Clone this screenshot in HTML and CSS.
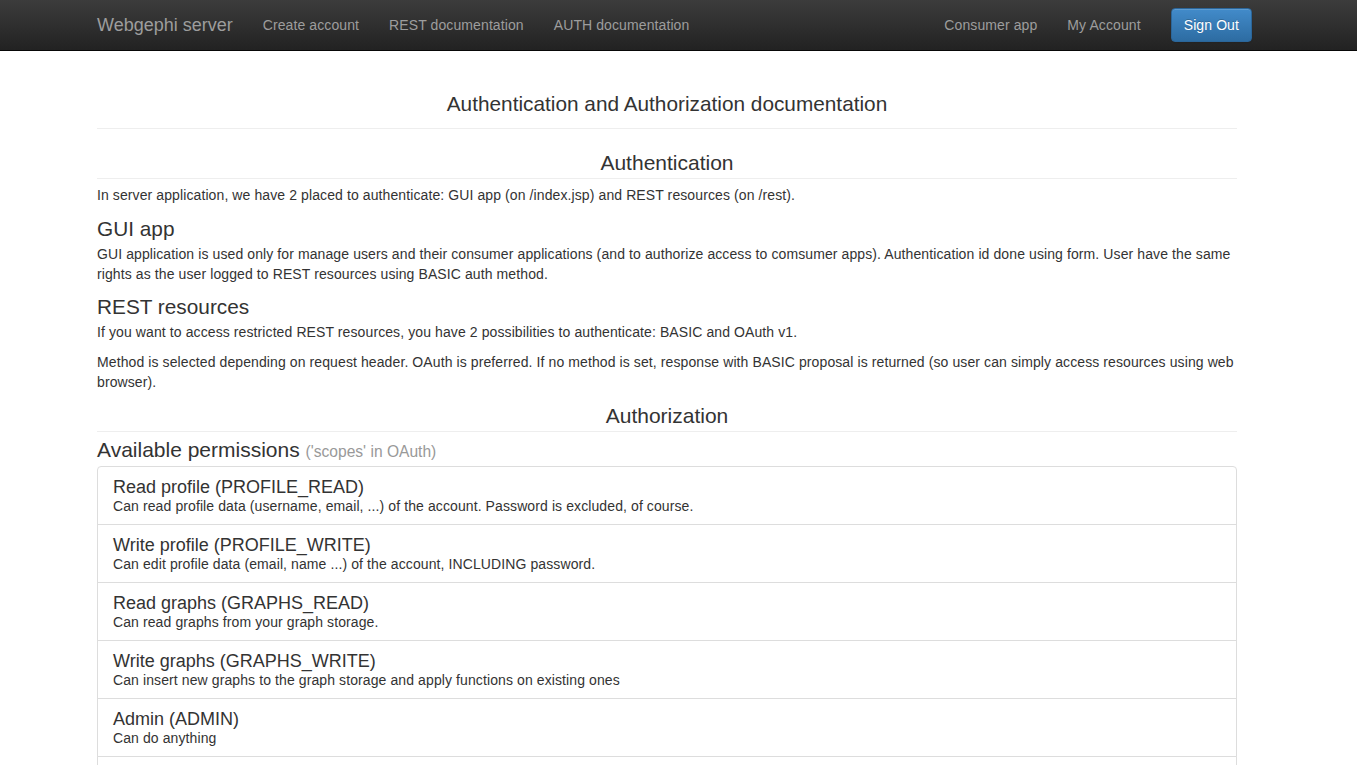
FILE: index.html
```html
<!DOCTYPE html>
<html lang="en">
<head>
<meta charset="utf-8">
<title>Webgephi server - AUTH documentation</title>
<link rel="stylesheet" href="styles.css">
</head>
<body>
<nav class="navbar">
  <div class="nav-inner">
    <a class="brand" href="#">Webgephi server</a>
    <ul class="nav">
      <li><a href="#">Create account</a></li>
      <li><a href="#">REST documentation</a></li>
      <li><a href="#">AUTH documentation</a></li>
    </ul>
    <div class="spacer"></div>
    <ul class="nav">
      <li><a href="#">Consumer app</a></li>
      <li><a href="#">My Account</a></li>
    </ul>
    <button class="btn-primary" type="button">Sign Out</button>
  </div>
</nav>

<main class="container">
  <h1 class="page-title">Authentication and Authorization documentation</h1>

  <h2 class="section-title">Authentication</h2>
  <p>In server application, we have 2 placed to authenticate: GUI app (on /index.jsp) and REST resources (on /rest).</p>

  <h3 class="sub-title">GUI app</h3>
  <p>GUI application is used only for manage users and their consumer applications (and to authorize access to comsumer apps). Authentication id done using form. User have the same rights as the user logged to REST resources using BASIC auth method.</p>

  <h3 class="sub-title">REST resources</h3>
  <p>If you want to access restricted REST resources, you have 2 possibilities to authenticate: BASIC and OAuth v1.</p>
  <p>Method is selected depending on request header. OAuth is preferred. If no method is set, response with BASIC proposal is returned (so user can simply access resources using web browser).</p>

  <h2 class="section-title">Authorization</h2>
  <h3 class="perm-title">Available permissions <small>('scopes' in OAuth)</small></h3>

  <ul class="list-group">
    <li class="list-item">
      <h4 class="item-heading">Read profile (PROFILE_READ)</h4>
      <p class="item-text">Can read profile data (username, email, ...) of the account. Password is excluded, of course.</p>
    </li>
    <li class="list-item">
      <h4 class="item-heading">Write profile (PROFILE_WRITE)</h4>
      <p class="item-text">Can edit profile data (email, name ...) of the account, INCLUDING password.</p>
    </li>
    <li class="list-item">
      <h4 class="item-heading">Read graphs (GRAPHS_READ)</h4>
      <p class="item-text">Can read graphs from your graph storage.</p>
    </li>
    <li class="list-item">
      <h4 class="item-heading">Write graphs (GRAPHS_WRITE)</h4>
      <p class="item-text">Can insert new graphs to the graph storage and apply functions on existing ones</p>
    </li>
    <li class="list-item">
      <h4 class="item-heading">Admin (ADMIN)</h4>
      <p class="item-text">Can do anything</p>
    </li>
    <li class="list-item">
      <h4 class="item-heading">&nbsp;</h4>
      <p class="item-text">&nbsp;</p>
    </li>
  </ul>
</main>
</body>
</html>
```

FILE: styles.css
```css
* { box-sizing: border-box; }

body {
  margin: 0;
  font-family: "Liberation Sans", Arial, Helvetica, sans-serif;
  font-size: 14px;
  line-height: 20px;
  letter-spacing: 0.1px;
  color: #333;
  background: #fff;
}

/* Navbar */
.navbar {
  height: 51px;
  background: linear-gradient(to bottom, #3c3c3c 0%, #222 100%);
  border-bottom: 1px solid #080808;
}

.nav-inner {
  width: 1170px;
  margin-left: 82px;
  height: 50px;
  display: flex;
  align-items: flex-start;
}

.brand {
  padding: 15px;
  font-size: 18px;
  line-height: 20px;
  letter-spacing: 0;
  color: #9d9d9d;
  text-decoration: none;
}

.nav {
  display: flex;
  list-style: none;
  margin: 0;
  padding: 0;
}

.nav a {
  display: block;
  padding: 15px;
  line-height: 20px;
  color: #9d9d9d;
  text-decoration: none;
}

.spacer { flex: 1; }

.btn-primary {
  margin: 8px 0 0 15px;
  padding: 6px 12px;
  font-family: inherit;
  font-size: 14px;
  line-height: 20px;
  letter-spacing: 0.1px;
  color: #fff;
  background: linear-gradient(to bottom, #428bca 0%, #2d6ca2 100%);
  border: 1px solid #2b669a;
  border-radius: 4px;
  text-shadow: 0 -1px 0 rgba(0, 0, 0, .2);
  box-shadow: inset 0 1px 0 rgba(255, 255, 255, .15), 0 1px 1px rgba(0, 0, 0, .075);
  cursor: pointer;
}

/* Content */
.container {
  width: 1140px;
  margin-left: 97px;
}

.page-title {
  margin: 42px 0 23px;
  padding-bottom: 13px;
  border-bottom: 1px solid #eee;
  text-align: center;
  font-size: 20.8px;
  line-height: 22px;
  letter-spacing: 0;
  font-weight: normal;
}

.section-title {
  margin: 13px 0 6px;
  padding-bottom: 4px;
  border-bottom: 1px solid #eee;
  text-align: center;
  font-size: 21px;
  line-height: 22px;
  letter-spacing: 0;
  font-weight: normal;
}

p { margin: 0 0 10px; }

.sub-title {
  margin: 12.5px 0 4px;
  font-size: 20.8px;
  line-height: 22px;
  letter-spacing: 0;
  font-weight: normal;
}

.perm-title {
  margin: 7px 0 3px;
  font-size: 21px;
  line-height: 22px;
  letter-spacing: 0;
  font-weight: normal;
}

.perm-title small {
  font-size: 15.6px;
  color: #999;
}

.list-group {
  list-style: none;
  margin: 0 0 20px;
  padding: 0;
}

.list-item {
  padding: 11px 15px 9px;
  border: 1px solid #ddd;
  margin-bottom: -1px;
  background: #fff;
}

.list-item:first-child {
  border-top-left-radius: 4px;
  border-top-right-radius: 4px;
}

.list-item:last-child {
  border-bottom-left-radius: 4px;
  border-bottom-right-radius: 4px;
}

.item-heading {
  margin: 0;
  font-size: 18px;
  line-height: 18.8px;
  letter-spacing: 0;
  font-weight: normal;
}

.item-text {
  margin: 0;
  line-height: 1.3;
}
```
